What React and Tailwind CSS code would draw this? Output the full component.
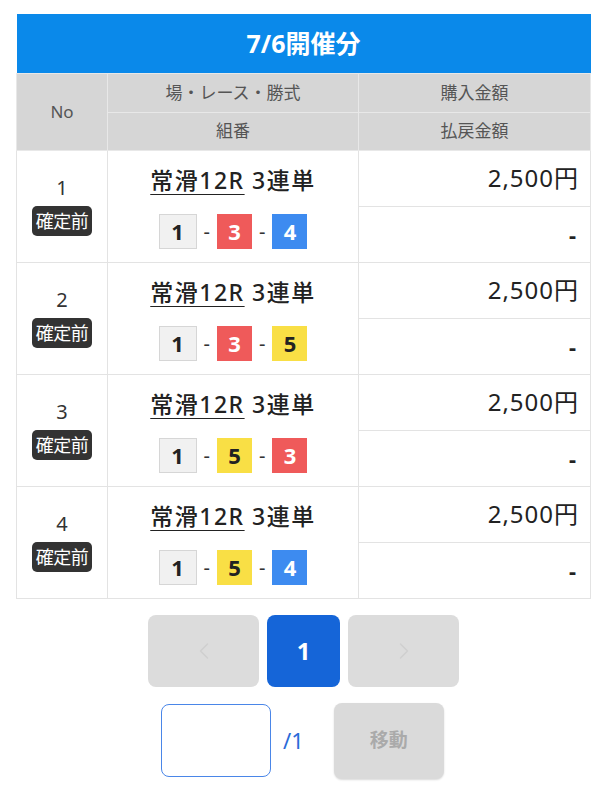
import React from 'react';
import { ChevronLeft, ChevronRight } from 'lucide-react';

const boatColors = {
    1: 'w-[38px] bg-[#f1f1f1] text-[#222] border border-[#d6d6d6]',
    3: 'w-[35px] bg-[#ef5a5a] text-white',
    4: 'w-[35px] bg-[#3d8bf0] text-white',
    5: 'w-[35px] bg-[#f9df45] text-[#222]',
};

const bets = [
    { no: 1, combo: [1, 3, 4] },
    { no: 2, combo: [1, 3, 5] },
    { no: 3, combo: [1, 5, 3] },
    { no: 4, combo: [1, 5, 4] },
];

const Boat = ({ n }) => (
    <span className={`inline-flex items-center justify-center h-[35px] text-[22px] font-bold ${boatColors[n]}`}>
        {n}
    </span>
);

const BetRow = ({ bet }) => (
    <>
        <tr className="h-[56px]">
            <td rowSpan={2} className="border border-[#e3e3e3] text-center align-middle">
                <div className="text-[20px] text-[#333] leading-none mt-[2px]">{bet.no}</div>
                <span className="inline-block mt-[8px] bg-[#333] text-white text-[18px] leading-[30px] px-[4px] rounded-[5px] tracking-tight">確定前</span>
            </td>
            <td className="border-x border-t border-[#e3e3e3] text-center align-middle pt-[4px]">
                <span className="text-[23px] text-[#222] font-medium tracking-[1.5px]">
                    <span className="underline underline-offset-[5px] decoration-1">常滑12R</span> 3連単
                </span>
            </td>
            <td className="border border-[#e3e3e3] text-right pr-[11px] text-[24px] text-[#222] tracking-[1px]">2,500円</td>
        </tr>
        <tr className="h-[56px]">
            <td className="border-x border-b border-[#e3e3e3] text-center align-middle">
                <div className="flex items-center justify-center gap-[7px] text-[20px] text-[#333] -mt-[4px]">
                    <Boat n={bet.combo[0]} />
                    <span>-</span>
                    <Boat n={bet.combo[1]} />
                    <span>-</span>
                    <Boat n={bet.combo[2]} />
                </div>
            </td>
            <td className="border border-[#e3e3e3] text-right pr-[14px] text-[22px] font-bold text-[#222]">-</td>
        </tr>
    </>
);

const App = () => {
    return (
        <div className="w-[607px] h-[800px] bg-white pt-[14px] px-[16px]" style={{ fontFamily: '"Noto Sans", "Noto Sans CJK JP", sans-serif' }}>
            <table className="w-[574px] border-collapse table-fixed">
                <colgroup>
                    <col className="w-[91px]" />
                    <col className="w-[251px]" />
                    <col className="w-[232px]" />
                </colgroup>
                <thead>
                    <tr className="h-[59px]">
                        <th colSpan={3} className="bg-[#0a89ea] text-white text-[25px] font-bold">7/6開催分</th>
                    </tr>
                    <tr className="h-[39px] bg-[#d6d6d6] text-[#555] text-[17px] font-normal">
                        <th rowSpan={2} className="font-normal border border-[#e8e8e8]">No</th>
                        <th className="font-normal border border-[#e8e8e8]">場・レース・勝式</th>
                        <th className="font-normal border border-[#e8e8e8]">購入金額</th>
                    </tr>
                    <tr className="h-[38px] bg-[#d6d6d6] text-[#555] text-[17px]">
                        <th className="font-normal border border-[#e8e8e8]">組番</th>
                        <th className="font-normal border border-[#e8e8e8]">払戻金額</th>
                    </tr>
                </thead>
                <tbody>
                    {bets.map((bet) => (
                        <BetRow key={bet.no} bet={bet} />
                    ))}
                </tbody>
            </table>

            <div className="flex justify-center gap-[8px] mt-[16px]">
                <button className="w-[111px] h-[72px] bg-[#dcdcdc] rounded-[8px] flex items-center justify-center">
                    <ChevronLeft className="w-7 h-7 text-[#cfcfcf]" strokeWidth={1.2} />
                </button>
                <button className="w-[73px] h-[72px] bg-[#1565d8] rounded-[8px] text-white text-[24px] font-bold">1</button>
                <button className="w-[111px] h-[72px] bg-[#dcdcdc] rounded-[8px] flex items-center justify-center">
                    <ChevronRight className="w-7 h-7 text-[#cfcfcf]" strokeWidth={1.2} />
                </button>
            </div>

            <div className="flex items-center mt-[16px] ml-[145px]">
                <input className="w-[110px] h-[73px] border-[1.5px] border-[#4a86e8] rounded-[8px] outline-none" />
                <span className="ml-[12px] text-[22px] text-[#2a6ad8]">/1</span>
                <button className="ml-[30px] w-[110px] h-[76px] bg-[#dadada] rounded-[8px] text-[#aaa] text-[19px] font-bold shadow-[0_1px_2px_rgba(0,0,0,0.15)]">移動</button>
            </div>
        </div>
    );
};

export default App;
